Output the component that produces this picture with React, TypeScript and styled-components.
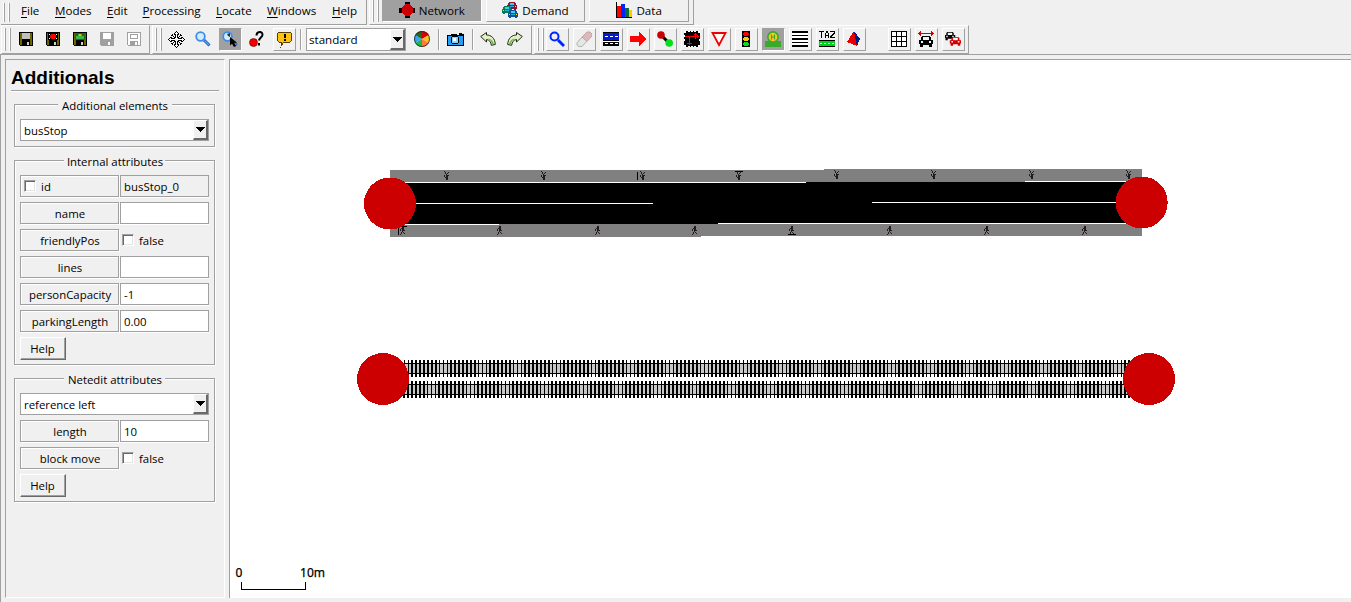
import React from "react";
import styled, { createGlobalStyle, css } from "styled-components";

const GREY = "#a0a0a0";
const FACE = "#f0f0f0";

const GlobalStyle = createGlobalStyle`
  * { box-sizing: border-box; }
  html, body { margin: 0; padding: 0; overflow: hidden; }
  body { background: ${FACE}; color: #000; font: 11.6px/16px "Open Sans", "Noto Sans", sans-serif; }
  svg { display: block; flex: none; }
`;

const Window = styled.div`
  display: flex;
  flex-direction: column;
  width: 1351px;
  height: 602px;
  background: ${FACE};
`;

const raised = css`
  border: 1px solid;
  border-color: #fff ${GREY} ${GREY} #fff;
`;
const sunken = css`
  border: 1px solid;
  border-color: ${GREY} #fff #fff ${GREY};
`;

const TopRow = styled.div`
  display: flex;
  gap: 2px;
  height: 25px;
  padding-left: 1px;
`;
const MenuBar = styled.div`
  display: flex;
  width: 366px;
  padding: 3px 0 0 3px;
  border-right: 1px solid ${GREY};
  border-bottom: 1px solid ${GREY};
`;
const MenuItem = styled.div<{ $w: number }>`
  width: ${(p) => p.$w}px;
  white-space: nowrap;
  &::first-letter { text-decoration: underline; text-underline-offset: 2px; }
`;
const ModeBar = styled.div`
  display: flex;
  width: 325px;
  padding-left: 3px;
  border-left: 1px solid #fff;
  border-right: 1px solid ${GREY};
  border-bottom: 1px solid ${GREY};
`;
const Grip = styled.div<{ $h: number; $gap: number }>`
  width: 6px;
  height: ${(p) => p.$h}px;
  margin-right: ${(p) => p.$gap}px;
  flex: none;
  border: solid;
  border-width: 0 1px;
  border-color: ${GREY};
  box-shadow: -1px 0 #fff, inset -1px 0 #fff;
`;
const ModeTab = styled.div<{ $active?: boolean; $gap?: number }>`
  display: flex;
  align-items: center;
  justify-content: center;
  gap: ${(p) => p.$gap ?? 4}px;
  width: 100px;
  height: 22px;
  margin-right: 4px;
  border: solid;
  border-width: 0 1px 1px;
  border-color: ${(p) => (p.$active ? `${GREY} #fff #fff ${GREY}` : `#fff ${GREY} ${GREY} #fff`)};
  background: ${(p) => (p.$active ? GREY : FACE)};
`;

const ToolRow = styled.div`
  display: flex;
  gap: 2px;
  height: 29px;
  padding-left: 1px;
`;
const ToolGroup = styled.div<{ $w: number }>`
  ${raised}
  display: flex;
  width: ${(p) => p.$w}px;
  padding: 2px 0 0 3px;
`;
const Tool = styled.div<{ $kind?: "flat" | "raised" | "active"; $ml?: number }>`
  width: 23px;
  height: 23px;
  flex: none;
  margin-right: 4px;
  margin-left: ${(p) => p.$ml ?? 0}px;
  padding: 2px;
  border: 1px solid transparent;
  ${(p) => p.$kind === "raised" && raised}
  ${(p) => p.$kind === "active" && css`${sunken} background: ${GREY};`}
`;
const Divider = styled.div<{ $ml: number; $mr: number }>`
  width: 2px;
  height: 21px;
  margin: 1px ${(p) => p.$mr}px 0 ${(p) => p.$ml}px;
  border-left: 1px solid ${GREY};
  border-right: 1px solid #fff;
`;

const ComboBox = styled.div<{ $w: number; $h: number; $pad: number }>`
  display: flex;
  justify-content: space-between;
  align-items: center;
  width: ${(p) => p.$w}px;
  height: ${(p) => p.$h}px;
  padding-left: ${(p) => p.$pad}px;
  background: #fff;
  border: 1px solid ${GREY};
  flex: none;
`;
const ComboText = styled.span`
  padding-top: 1px;
`;
const ComboButton = styled.div`
  display: flex;
  align-items: center;
  justify-content: center;
  width: 15px;
  height: 100%;
  background: ${FACE};
  border: solid;
  border-width: 1px 2px 2px 1px;
  border-color: #fff #696969 #696969 #fff;
`;

const Workspace = styled.div`
  display: flex;
  flex: 1;
  padding: 4px 0 4px 4px;
  border: solid ${GREY};
  border-width: 1px 0 0 1px;
`;
const SidePanel = styled.div`
  ${sunken}
  width: 220px;
  margin-right: 4px;
  padding: 6px 5px 0 5px;
  font-size: 11.4px;
`;
const Title = styled.h1`
  margin: 0 0 13px;
  height: 25px;
  padding-left: 0;
  border-bottom: 1px solid ${GREY};
  box-shadow: 0 1px #fff;
  font: bold 19px/23px "Liberation Sans", Arial, sans-serif;
`;
const GroupBox = styled.div<{ $h: number }>`
  height: ${(p) => p.$h}px;
  width: 201px;
  margin: 0 0 13px 3px;
  padding: 0 5px;
  border: 1px solid ${GREY};
  box-shadow: 1px 1px #fff, inset 1px 1px #fff;
`;
const GroupTitle = styled.div<{ $w: number }>`
  position: relative;
  top: -7px;
  width: ${(p) => p.$w}px;
  height: 16px;
  margin: 0 auto -2px;
  padding-left: 1px;
  text-align: center;
  white-space: nowrap;
  background: ${FACE};
`;
const Row = styled.div`
  display: flex;
  gap: 1px;
  height: 23px;
  margin-bottom: 4px;
`;
const LabelCell = styled.div<{ $left?: boolean }>`
  display: flex;
  align-items: center;
  justify-content: ${(p) => (p.$left ? "flex-start" : "center")};
  gap: 5px;
  width: 99px;
  flex: none;
  height: 22px;
  padding-top: 1px;
  padding-left: ${(p) => (p.$left ? 3 : 1)}px;
  border: 1px solid ${GREY};
  box-shadow: inset 1px 1px #fff, 1px 1px #fff;
`;
const Field = styled.div<{ $readOnly?: boolean }>`
  display: flex;
  align-items: center;
  width: 89px;
  flex: none;
  height: 22px;
  padding: 1px 0 0 3px;
  border: 1px solid ${GREY};
  box-shadow: 0 1px #fff;
  background: ${(p) => (p.$readOnly ? FACE : "#fff")};
`;
const CheckField = styled.div`
  display: flex;
  align-items: center;
  gap: 5px;
  height: 22px;
  padding-top: 1px;
  margin-left: 2px;
`;
const CheckBox = styled.span`
  width: 12px;
  height: 12px;
  margin-bottom: 1px;
  border: 1px solid;
  border-color: ${GREY} #fff #fff ${GREY};
  box-shadow: inset 1px 1px #696969, inset -1px -1px #e3e3e3;
  background: #fff;
`;
const HelpButton = styled.div`
  width: 46px;
  height: 23px;
  padding: 3px 1px 0 0;
  text-align: center;
  border: 1px solid;
  border-color: #fff #696969 #696969 #fff;
  box-shadow: inset -1px -1px ${GREY};
`;
const Canvas = styled.div`
  flex: 1;
  height: 539px;
  background: #fff;
  border: solid ${GREY};
  border-width: 1px 0 0 1px;
`;

const Arrow = () => (
  <svg width="9" height="5" shapeRendering="crispEdges"><path d="M0 0h9v1H0zM1 1h7v1H1zM2 2h5v1H2zM3 3h3v1H3zM4 4h1v1H4z" /></svg>
);

const Icon = ({ children, smooth, w = 16 }: { children: React.ReactNode; smooth?: boolean; w?: number }) => (
  <svg width={w} height="17" viewBox={`0 0 ${w} 17`} shapeRendering={smooth ? "auto" : "crispEdges"}>{children}</svg>
);

const Disk = ({ label, faded }: { label: React.ReactNode; faded?: boolean }) => (
  <Icon>
    <path d="M1 1h14v14H2l-1-1z" fill={faded ? GREY : "#000"} />
    {!faded && <path d="M2 2h2v8h8V2h2v12H2z" fill="#6b6700" />}
    {label}
    <path d="M4 10h8v5H4z" fill={faded ? GREY : "#000"} />
    <path d="M9 11h2v3H9z" fill={faded ? "#fff" : "#d0d0d0"} />
  </Icon>
);

const Car = ({ x, y, c }: { x: number; y: number; c: string }) => (
  <g transform={`translate(${x} ${y})`}>
    <path d="M2 0h6v1h1v2h1v4H9v1H7V7H3v1H1V7H0V3h1V1h1z" fill={c} />
    <path d="M3 1h4v2H3z" fill="#2bd4f4" /><path d="M3 4h4v1H3z" fill="#2bd4f4" opacity=".7" /><path d="M1 4h1v1H1zM8 4h1v1H8z" fill="#ffd42a" />
  </g>
);

const Glass = () => (
  <>
    <path d="M9 9l5.500 5.500" stroke="#1b55c8" strokeWidth="3" />
    <path d="M9.500 9.500l4.500 4.500" stroke="#5aa9f5" strokeWidth="1.2" />
    <circle cx="5.500" cy="5.500" r="4.300" fill="#d4ecff" stroke="#3e8ce8" strokeWidth="1.800" />
  </>
);

const CarFront = ({ c }: { c: string }) => (
  <>
    <path d="M4 0h8v1h1v3h2v4h-1v3h-3V9H5v2H2V8H1V4h2V1h1z" fill={c} />
    <path d="M5 1h6v3H5z" fill={FACE} /><path d="M3 5h2v2H3zM11 5h2v2h-2z" fill={FACE} />
  </>
);

const UndoShape = () => (
  <>
    <path d="M.7 5.500L6.500 1.500v2.500C11 4 15 7 15.300 13.500l-4 .8C11 11 9.500 9 6.500 8.500V11z" fill="#e3efc4" stroke="#1d2b16" />
    <path d="M8.500 7.500c3 .5 4.500 2.500 5.500 5.500l-1.800.4C11.600 10.500 10.500 9 8.500 8.300z" fill="#69b84e" />
  </>
);

const MoveIcon = () => (
  <Icon w={17}>
    {[0, 90, 180, 270].map((angle) => (
      <g key={angle} transform={`rotate(${angle} 8.5 8.5)`}>
        <path d="M8 1h1v1h1v1h1v1H9v3H8V4H6V3h1V2h1z" fill="#fff" />
        <path d="M8 0h1v1H8zM7 1h1v1H7zM9 1h1v1H9zM6 2h1v1H6zM10 2h1v1h-1zM6 3h2v1H6zM9 3h2v1H9zM7 4h1v3H7zM9 4h1v3H9z" />
        <path d="M3 4h2v1H3zM4 3h1v1H4zM5 5h1v1H5zM6 6h1v1H6z" />
      </g>
    ))}
  </Icon>
);

const WALKER = "M3 0h2v2H3zM2 2h3v1H2zM1 3h1v2H1zM3 3h2v2H3zM5 4h1v1H5zM3 5h1v1H3zM2 6h1v2H2zM4 6h1v1H4zM5 7h1v1H5zM1 8h1v1H1z";
const walkersTop = [443, 540, 639, 735, 833, 930, 1028, 1125];
const walkersBottom = [399, 496, 594, 691, 788, 886, 983, 1081];

/* Sleepers of one track: evenly spaced bars, each snapped to whole pixels. */
const sleepers = (start: number, y: number) => {
  let d = "";
  for (let x = start; x < 1132; x += 3.896) {
    const left = Math.ceil(x - 0.5);
    const right = Math.ceil(x + 1.2);
    d += `M${left} ${y}h${right - left}v17h${left - right}z`;
  }
  return d;
};

const Track = ({ start, y }: { start: number; y: number }) => (
  <>
    <rect x="400" y={y + 4} width="730" height="9" fill="#c8c8c8" />
    <path d={sleepers(start, y)} />
    <path d={`M400 ${y + 3}h730v1H400zM400 ${y + 13}h730v1H400z`} />
  </>
);

const NetworkView = () => (
  <svg width="1121" height="538" viewBox="230 60 1121 538" shapeRendering="crispEdges">
    <path d="M390 170h434v-1h318v67H701v1H390z" fill="#808080" />
    <path d="M404 183h402v-1h320v42H404z" />
    <path d="M404 182h402v1H404zM1025 181h101v1h-101zM410 203h243v1H410zM872 202h250v1H872zM404 224h95v1h-95zM718 223h408v1H718z" fill="#fff" />
    {walkersTop.map((x, i) => (
      <path key={x} d={WALKER} fill="#231a1c" transform={`translate(${x} ${i < 4 ? 180 : 179}) scale(1 -1)`} />
    ))}
    {walkersBottom.map((x) => (
      <path key={x} d={WALKER} fill="#231a1c" transform={`translate(${x} 226)`} />
    ))}
    <path d="M637 172h1v8h-1zM735 171h8v1h-8zM398 228h1v7h-1zM401 226h6v1h-6zM788 234h8v1h-8z" />
    <Track start={399.8} y={360} />
    <Track start={399.5} y={381} />
    <g fill="#c00">
      <circle cx="390" cy="203.5" r="26" />
      <circle cx="1141.7" cy="202.5" r="26" />
      <circle cx="383" cy="379" r="26" />
      <circle cx="1149" cy="379" r="26" />
    </g>
    <path d="M241 582h1v7h63v-7h1v8h-65z" />
    <g fontFamily="Noto Sans, sans-serif" fontSize="12" stroke="#000" strokeWidth=".25">
      <text x="235.5" y="577">0</text>
      <text x="300" y="577" textLength="25">10m</text>
    </g>
  </svg>
);

const Combo = ({ text, w, h, pad = 3 }: { text: string; w: number; h: number; pad?: number }) => (
  <ComboBox $w={w} $h={h} $pad={pad}><ComboText>{text}</ComboText><ComboButton><Arrow /></ComboButton></ComboBox>
);

const Attribute = ({ name, value, check, left }: { name: string; value?: string; check?: boolean; left?: boolean }) => (
  <Row>
    <LabelCell $left={left}>{left && <CheckBox />}{name}</LabelCell>
    {check ? <CheckField><CheckBox />{value}</CheckField> : <Field $readOnly={left}>{value}</Field>}
  </Row>
);

const menus: [string, number][] = [["File", 34], ["Modes", 52], ["Edit", 35.5], ["Processing", 73.5], ["Locate", 51], ["Windows", 65], ["Help", 30]];

export default function App() {
  return (
    <Window>
      <GlobalStyle />
      <TopRow>
        <MenuBar>
          <Grip $h={19} $gap={11} />
          {menus.map(([m, w]) => <MenuItem key={m} $w={w}>{m}</MenuItem>)}
        </MenuBar>
        <ModeBar>
          <Grip $h={22} $gap={3} />
          <ModeTab $active>
            <Icon><path d="M6 0h5v16H6zM0 6h16v5H0z" /><path d="M6 2h5v1h1v1h1v1h1v6h-1v1h-1v1h-1v1H6v-1H5v-1H4v-1H3V5h1V4h1V3h1z" fill="#c00" /></Icon>Network
          </ModeTab>
          <ModeTab>
            <Icon><Car x={5} y={0} c="#8a1538" /><Car x={0} y={4} c="#0a7a5a" /><Car x={6} y={8} c="#0b4fa0" /></Icon>Demand
          </ModeTab>
          <ModeTab>
            <Icon><path d="M0 0h1v15h15v1H0z" /><path d="M1 4h4v11H1z" fill="#f00" /><path d="M5 2h4v13H5z" fill="#0026ff" /><path d="M9 6h4v9H9z" fill="#0a6a3c" /><path d="M13 8h3v7h-3z" fill="#ffc800" /></Icon>Data
          </ModeTab>
        </ModeBar>
      </TopRow>
      <ToolRow>
        <ToolGroup $w={149}>
          <Grip $h={23} $gap={4} />
          <Tool><Disk label={<path d="M4 2h8v6H4z" fill="#c0c0c0" />} /></Tool>
          <Tool><Disk label={<><path d="M3 2h10v7H3z" /><path d="M6 3h4v5H6z" fill="#f00" /><path d="M5 4h6v3H5z" fill="#f00" /><path d="M4 3h1v1H4zM11 3h1v1h-1zM4 7h1v1H4zM11 7h1v1h-1z" fill="#fff" /></>} /></Tool>
          <Tool><Disk label={<><path d="M3 2h10v7H3z" fill="#1c6b1c" /><path d="M4 5h2V3h4v2h2v3H4z" fill="#39b54a" /><path d="M7 3h2v2H7z" fill="#e8c000" /></>} /></Tool>
          <Tool><Disk faded label={<path d="M4 2h8v6H4z" fill="#fff" />} /></Tool>
          <Tool><Disk faded label={<><path d="M2 2h12v12H2z" fill="#fff" /><path d="M4 3h8v5H4z" fill={GREY} /><path d="M5 4h6v3H5z" fill="#fff" /></>} /></Tool>
        </ToolGroup>
        <ToolGroup $w={380}>
          <Grip $h={23} $gap={3} />
          <Tool><MoveIcon /></Tool>
          <Tool><Icon smooth><Glass /></Icon></Tool>
          <Tool $kind="active"><Icon smooth><Glass /><path d="M5 3l3-1v4L6 5z" fill="#333" /><path d="M8 6v8.500l2-1.700 2 3.200 2-1-1.800-3.200h3z" /></Icon></Tool>
          <Tool><Icon smooth><circle cx="4.500" cy="11.500" r="4" fill="#f00000" stroke="#600" strokeWidth=".6" /><path d="M7.500 4.500c0-4.500 6-4.500 6-1 0 3-3 3-3.500 6M10 12v2.500" fill="none" stroke="#000" strokeWidth="2" /></Icon></Tool>
          <Tool $kind="raised"><Icon><path d="M3 1h11l1 1v8l-1 1H8l-3 4v-4H3L1 9V3z" fill="#ffc20e" stroke="#5a4000" /><path d="M8 3h2v4H8zM8 8h2v2H8z" /></Icon></Tool>
          <Divider $ml={0} $mr={4} />
          <Combo text="standard" w={100} h={23} pad={2} />
          <Tool $ml={5}>
            <Icon smooth>
              <path d="M8 8V0a8 8 0 0 1 6.900 4z" fill="#d80000" /><path d="M8 8l6.900-4a8 8 0 0 1 0 8z" fill="#ffc21a" /><path d="M8 8l6.900 4A8 8 0 0 1 8 16z" fill="#ff7a3c" /><path d="M8 8v8a8 8 0 0 1-6.900-4z" fill="#27b34b" /><path d="M8 8l-6.900 4a8 8 0 0 1 0-8z" fill="#39a3ee" /><path d="M8 8L1.100 4A8 8 0 0 1 8 0z" fill="#206a1c" />
              <circle cx="8" cy="8" r="7.500" fill="none" stroke="#222" strokeWidth=".8" />
            </Icon>
          </Tool>
          <Divider $ml={0} $mr={3} />
          <Tool $ml={1}><Icon w={17}><path d="M0 4h4V3h6v1h2V2h3v1h2v12H0z" /><path d="M1 5h15v9H1z" fill="#2a9df4" /><path d="M5 5h6v1h1v6h-1v1H5v-1H4V6h1z" /><path d="M5 6h6v6H5z" fill="#8fd6ff" /><path d="M6 7h3v3H6z" fill="#fff" /></Icon></Tool>
          <Divider $ml={1} $mr={3} />
          <Tool><Icon smooth><UndoShape /></Icon></Tool>
          <Tool><Icon smooth><g transform="translate(16) scale(-1 1)"><UndoShape /></g></Icon></Tool>
        </ToolGroup>
        <ToolGroup $w={435}>
          <Grip $h={23} $gap={2} />
          <Tool $kind="raised"><Icon smooth><path d="M9 9l6 6" stroke="#0026ff" strokeWidth="3" /><circle cx="5.500" cy="5.500" r="4" fill="none" stroke="#0026ff" strokeWidth="2" /></Icon></Tool>
          <Tool $kind="raised"><Icon smooth><path d="M1 12l5-6 5 4-5 5.500H3L1 14z" fill="#e4e8e4" stroke="#b0b4b0" /><path d="M6 6l5-5h3l2 2v2l-5 5.500z" fill="#dcb8b8" stroke="#c0a8a8" /></Icon></Tool>
          <Tool $kind="raised"><Icon><path d="M0 1h16v14H0z" /><path d="M0 2h16v7H0z" fill="#0018d8" /><path d="M2 5h3v1H2zM7 5h3v1H7zM12 5h3v1h-3zM0 10h16v1H0zM2 12h3v1H2zM7 12h3v1H7zM12 12h3v1h-3z" fill="#fff" /></Icon></Tool>
          <Tool $kind="raised"><Icon><path d="M0 5h9V1l7 7-7 7v-4H0z" fill="#f00" /></Icon></Tool>
          <Tool $kind="raised"><Icon smooth><path d="M4 4l8 8" stroke="#000" strokeWidth="3" /><circle cx="4" cy="4" r="3.800" fill="#c80000" /><circle cx="12.200" cy="12" r="3.800" fill="#00e01a" /></Icon></Tool>
          <Tool $kind="raised"><Icon><path d="M0 0h16v16H0z" /><path d="M0 0h2v2H0zM4 0h2v1H4zM7 0h2v1H7zM10 0h2v1h-2zM14 0h2v2h-2zM0 14h2v2H0zM4 15h2v1H4zM7 15h2v1H7zM10 15h2v1h-2zM14 14h2v2h-2zM0 4h1v2H0zM0 8h1v2H0zM15 8h1v2h-1z" fill="#fff" /><path d="M1 5h14v1H1zM5 6h1v8H5zM11 2h1v6h-1zM3 12h5v1H3zM10 3h3v1h-3zM13 4h1v3h-1z" fill="#f00" /></Icon></Tool>
          <Tool $kind="raised"><Icon smooth><path d="M1.500 2h13L8 14z" fill="#fff" stroke="#f00000" strokeWidth="1.800" /></Icon></Tool>
          <Tool $kind="raised"><Icon><path d="M4 0h8v16H4z" /><path d="M6 1h4v1h1v2h-1v1H6V4H5V2h1z" fill="#f00" /><path d="M6 6h4v1h1v2h-1v1H6V9H5V7h1z" fill="#ffc20e" /><path d="M6 11h4v1h1v2h-1v1H6v-1H5v-2h1z" fill="#00e01a" /></Icon></Tool>
          <Tool $kind="active"><Icon smooth><path d="M0 10h16v6H0z" fill="#3aaa2e" /><circle cx="8" cy="6" r="6" fill="#3aaa2e" /><circle cx="8" cy="6" r="4.300" fill="#ffc81a" /><path d="M6.500 3.500v5M9.500 3.500v5M6.500 6h3" stroke="#3aaa2e" strokeWidth="1.200" fill="none" /></Icon></Tool>
          <Tool $kind="raised"><Icon><path d="M0 0h16v16H0z" fill="#fff" /><path d="M0 0h16v2H0zM0 4h16v1H0zM0 7h16v2H0zM0 11h16v1H0zM0 14h16v2H0z" /></Icon></Tool>
          <Tool $kind="raised"><Icon><path d="M0 0h5v1H3v6H2V1H0zM7 0h2v2h1v5H9V5H7v2H6V2h1zM7 2v2h2V2zM11 0h5v2l-4 4v0h4v1h-5V5l4-4h-4z" /><path d="M0 9h16v7H0z" fill="#00d21a" /><path d="M0 9h16v1H0zM0 15h16v1H0z" /><path d="M1 12h2v1H1zM5 12h2v1H5zM9 12h2v1H9zM13 12h2v1h-2z" fill="#fff" /></Icon></Tool>
          <Tool $kind="raised"><Icon><path d="M8 0l6 8-3 7z" fill="#001c8c" /><path d="M8 0l3 15-10-4z" fill="#e80000" /></Icon></Tool>
          <Tool $kind="raised" $ml={18}><Icon><path d="M0 0h16v16H0z" /><path d="M1 1h4v4H1zM6 1h4v4H6zM11 1h4v4h-4zM1 6h4v4H1zM6 6h4v4H6zM11 6h4v4h-4zM1 11h4v4H1zM6 11h4v4H6zM11 11h4v4h-4z" fill="#fff" /></Icon></Tool>
          <Tool $kind="raised"><Icon><path d="M0 2h1V1h1V0h1v2h10V0h1v1h1v1h1v1h-1v1h-1v1h-1V3H3v2H2V4H1V3H0z" fill="#d00000" /><g transform="translate(0 5)"><CarFront c="#000" /></g></Icon></Tool>
          <Tool $kind="raised"><Icon smooth><g transform="translate(-1 1) scale(.75)"><CarFront c="#000" /></g><g transform="translate(4 6) scale(.8)"><CarFront c="#d00000" /></g></Icon></Tool>
        </ToolGroup>
      </ToolRow>
      <Workspace>
        <SidePanel>
          <Title>Additionals</Title>
          <GroupBox $h={43}>
            <GroupTitle $w={114}>Additional elements</GroupTitle>
            <Combo text="busStop" w={189} h={22} />
          </GroupBox>
          <GroupBox $h={205}>
            <GroupTitle $w={101}>Internal attributes</GroupTitle>
            <Attribute name="id" value="busStop_0" left />
            <Attribute name="name" />
            <Attribute name="friendlyPos" value="false" check />
            <Attribute name="lines" />
            <Attribute name="personCapacity" value="-1" />
            <Attribute name="parkingLength" value="0.00" />
            <HelpButton>Help</HelpButton>
          </GroupBox>
          <GroupBox $h={124}>
            <GroupTitle $w={101}>Netedit attributes</GroupTitle>
            <Row><Combo text="reference left" w={189} h={22} /></Row>
            <Attribute name="length" value="10" />
            <Attribute name="block move" value="false" check />
            <HelpButton>Help</HelpButton>
          </GroupBox>
        </SidePanel>
        <Canvas><NetworkView /></Canvas>
      </Workspace>
    </Window>
  );
}
